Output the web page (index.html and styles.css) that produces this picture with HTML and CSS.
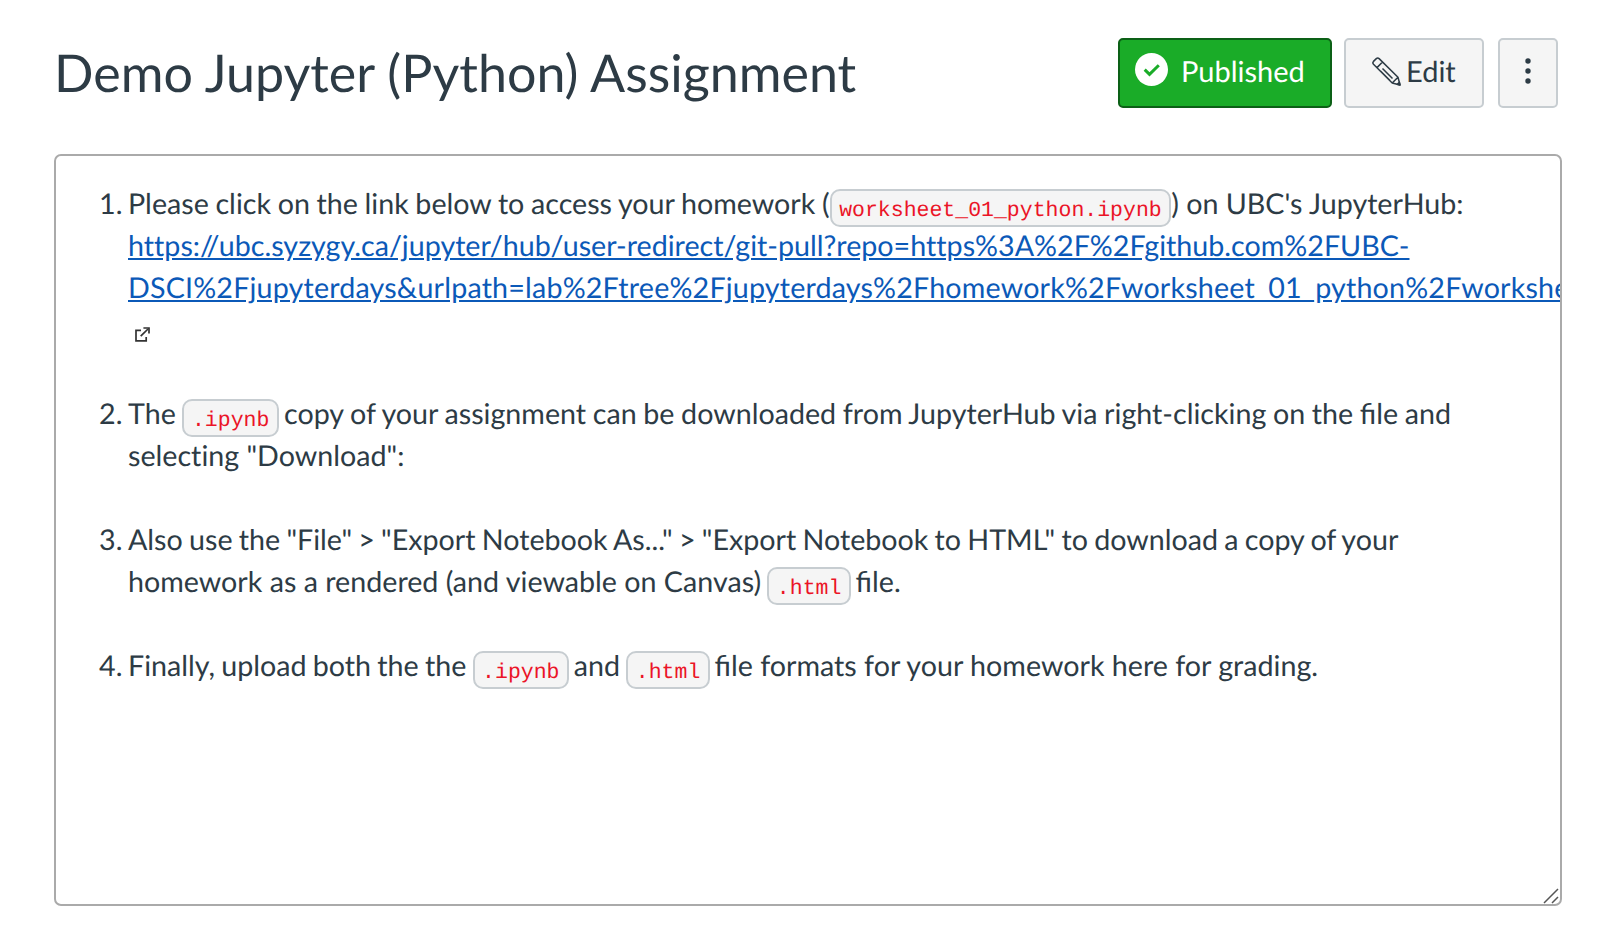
FILE: index.html
```html
<!DOCTYPE html>
<html lang="en">
<head>
<meta charset="utf-8">
<title>Demo Jupyter (Python) Assignment</title>
<link rel="stylesheet" href="styles.css">
</head>
<body>
<header class="header">
  <h1 class="title">Demo Jupyter (Python) Assignment</h1>
  <div class="actions">
    <button class="btn btn-published">
      <svg class="check" viewBox="0 0 33 33"><circle cx="16.5" cy="16.5" r="16.5" fill="#fff"/><path d="M9.7 16.6l4.8 4.8 9.3-9.2" fill="none" stroke="#1aac28" stroke-width="3"/></svg>
      <span>Published</span>
    </button>
    <button class="btn btn-edit">
      <svg class="pencil" viewBox="0 0 29 29" fill="none" stroke="#2d3b45" stroke-width="1.5" stroke-linejoin="round"><path d="M1.5 7.2Q.2 5.8 1.5 4.4L4.3 1.6Q5.7.3 7.1 1.6L26 20.3l2 7.7-7.8-2L1.5 7.2zM5 10.6L10.5 5M20.2 26l5.8-5.7M10.5 11.5l10 10M8.5 14l9.5 9.5"/><path d="M25.2 27.3l2.2-2 .6 2.7z" fill="#2d3b45"/></svg>
      <span>Edit</span>
    </button>
    <button class="btn btn-more" aria-label="More options">
      <svg class="dots" viewBox="0 0 6 26" fill="#2d3b45"><circle cx="3" cy="3" r="2.7"/><circle cx="3" cy="13" r="2.7"/><circle cx="3" cy="23" r="2.7"/></svg>
    </button>
  </div>
</header>
<main class="panel">
  <ol class="steps">
    <li class="snug">Please click on the link below to access your homework (<code class="joined">worksheet_01_python.ipynb</code><span class="plain">) on UBC's JupyterHub:</span> <a class="link" href="#">https://ubc.syzygy.ca/jupyter/hub/user-redirect/git-pull?repo=https%3A%2F%2Fgithub.com%2FUBC-<span class="loose">DSCI%2Fjupyterdays&amp;urlpath=lab%2Ftree%2Fjupyterdays%2Fhomework%2Fworksheet_01_python%2Fworksheet_01_python.ipynb</span></a> <svg class="external" viewBox="0 0 15 15" fill="none" stroke="#333" stroke-width="1.7"><path d="M6 3.4H1v10.4h10.2V10M5.7 9.2L13 2"/><path d="M8.4 1H14v5.4"/></svg></li>
    <li class="snug">The <code>.ipynb</code> copy of your assignment can be downloaded from JupyterHub via right-clicking on the file and <span class="plain">selecting "Download":</span></li>
    <li class="tight">Also use the "File" &gt; "Export Notebook As..." &gt; "Export Notebook to HTML" to download a copy of your <span class="plain">homework as a rendered (and viewable on Canvas)</span> <code>.html</code> file.</li>
    <li class="tight">Finally, upload both the the <code>.ipynb</code> and <code>.html</code> <span class="even">file formats for your homework here for grading.</span></li>
  </ol>
  <svg class="grip" viewBox="0 0 16 16" stroke="#555" stroke-width="1.5"><path d="M1 15L15 1M9 15l6-6"/></svg>
</main>
</body>
</html>
```
FILE: styles.css
```css
* { box-sizing: border-box; }
body {
  margin: 0;
  padding: 38px 60px 0 54px;
  background: #fff;
  color: #2d3b45;
  font: 28.67px/42px Lato, sans-serif;
  text-rendering: geometricPrecision;
}
.header {
  display: flex;
  justify-content: space-between;
  align-items: flex-start;
  padding-right: 4px;
}
.title {
  margin: 0;
  font-size: 52px;
  font-weight: 400;
  line-height: 70px;
}
.actions { display: flex; }
.btn {
  display: flex;
  align-items: center;
  height: 70px;
  padding: 0 0 4px;
  border: 2px solid #c7cdd1;
  border-radius: 5px;
  background: #f5f5f5;
  color: #2d3b45;
  font: inherit;
  font-size: 29px;
  text-rendering: inherit;
}
.btn span { padding-top: 2px; }
.btn-published {
  width: 214px;
  padding-left: 15px;
  gap: 13px;
  background: #1aac28;
  border-color: #0c6016;
  color: #fff;
}
.btn-edit { width: 140px; margin-left: 12px; padding-left: 26px; gap: 5px; }
.btn-more { width: 60px; margin-left: 14px; justify-content: center; }
.check { width: 33px; height: 33px; margin-bottom: 3px; }
.pencil { width: 29px; height: 29px; }
.dots { width: 6px; height: 26px; }
.panel {
  position: relative;
  height: 752px;
  margin-top: 46px;
  padding: 27px 66px 0 72px;
  border: 2px solid #aaa;
  border-radius: 7px;
  overflow: hidden;
}
.steps {
  margin: 0;
  padding: 0;
  list-style: none;
  counter-reset: step;
}
.steps li {
  margin-bottom: 42px;
  counter-increment: step;
}
.steps li::before {
  content: counter(step) ".";
  display: inline-block;
  width: 29px;
  margin-left: -29px;
}
.steps .snug { word-spacing: -0.7px; }
.steps .tight { word-spacing: -1.1px; }
.even { word-spacing: 0; }
.plain { font-variant-ligatures: none; word-spacing: 0; }
code {
  display: inline-block;
  height: 38px;
  margin: -6px -1.5px -6px 0;
  padding: 0 7.5px;
  border: 2px solid #c7cdd1;
  border-radius: 10px;
  background: #f5f5f5;
  color: #eb1427;
  font: 21.5px/40px "Liberation Mono", monospace;
  vertical-align: -2px;
}
.joined { margin-right: 0; }
.link {
  color: #0b59b8;
  text-decoration: underline;
  font-variant-ligatures: none;
}
.loose { letter-spacing: 0.18px; }
.external { width: 15px; height: 15px; margin-left: 7px; vertical-align: -2px; }
.grip { position: absolute; right: 1px; bottom: 0; width: 16px; height: 16px; }
```
